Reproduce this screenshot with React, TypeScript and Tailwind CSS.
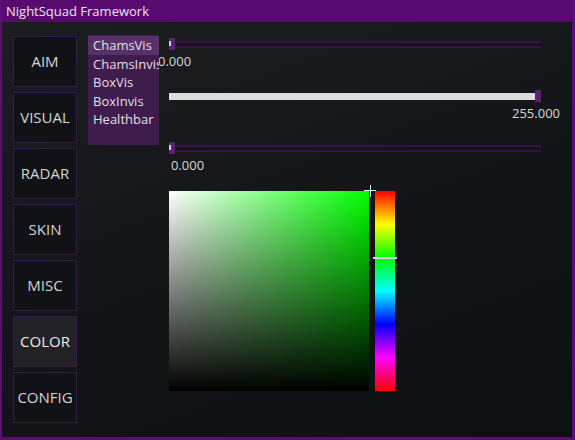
import React from 'react';

const tabs = ['AIM', 'VISUAL', 'RADAR', 'SKIN', 'MISC', 'COLOR', 'CONFIG'];
const items = ['ChamsVis', 'ChamsInvis', 'BoxVis', 'BoxInvis', 'Healthbar'];

// ImGui-ish slider: track, fill, grab, value below
const Slider = ({ value, labelClass }: { value: number; labelClass: string }) => {
  const pct = value / 255;
  return (
    <div className="flex flex-col">
      <div className="relative h-[12px] flex items-center">
        <div className="relative h-[7px] w-full border-y-2 border-[#3a0f4a] bg-[#141417]">
          {value > 0 && (
            <div className="absolute left-0 top-[-2px] h-[7px] bg-[#dcdcdc]" style={{ width: `${pct * 98.5}%` }} />
          )}
        </div>
        <div
          className="absolute top-0 h-[12px] w-[6px] bg-[#5a2270]"
          style={{ left: `${pct * 98.5}%` }}
        />
        {value === 0 && <div className="absolute left-0 top-[3px] h-[5px] w-[2px] bg-[#d8d0dc]" />}
      </div>
      <div className={`mt-[3px] text-[13px] leading-[16px] text-[#d8d8d8] ${labelClass}`}>
        {value.toFixed(3)}
      </div>
    </div>
  );
};

export default function App() {
  return (
    <div
      className="w-[575px] h-[440px] flex flex-col overflow-hidden border-l-2 border-r-[3px] border-b-[3px] border-[#5a0f70] bg-[#141518]"
      style={{ fontFamily: '"Open Sans", "DejaVu Sans", sans-serif' }}
    >
      <div className="h-[22px] shrink-0 bg-[#570b6e] pl-[4px] text-[13px] leading-[22px] text-[#ece4f0]">
        NightSquad Framework
      </div>
      <div className="flex-1 flex bg-[linear-gradient(160deg,#1c1d1f_0%,#141518_50%,#0e0f12_100%)] pl-[11px] pt-[14px]">
        <div className="flex flex-col gap-[5px]">
          {tabs.map((t) => (
            <div
              key={t}
              className={`w-[64px] h-[51px] flex items-center justify-center border border-[#3c1848] text-[15px] ${
                t === 'COLOR' ? 'bg-[#222124] text-[#ececec]' : 'bg-[#111215] text-[#d4d4d4]'
              }`}
            >
              {t}
            </div>
          ))}
        </div>

        <div className="relative ml-[11px] mt-[-1px] flex">
          <div className="z-10 w-[71px] h-[110px] overflow-hidden bg-[#3e1c4c] pt-[1px] text-[13px] text-[#e6dfe9]">
            {items.map((it, i) => (
              <div
                key={it}
                className={`h-[18.6px] leading-[18.6px] whitespace-nowrap pl-[5px] ${i === 0 ? 'bg-[#573168]' : ''}`}
              >
                {it}
              </div>
            ))}
          </div>

          <div className="ml-[10px] mt-[3px] flex flex-col w-[372px]">
            <Slider value={0} labelClass="ml-[-11px] relative z-0" />
            <div className="mt-[21px]">
              <Slider value={255} labelClass="self-end mr-[-19px]" />
            </div>
            <div className="mt-[21px]">
              <Slider value={0} labelClass="ml-[2px]" />
            </div>

            <div className="mt-[18px] flex gap-[6px]">
              <div className="relative w-[200px] h-[200px] bg-[#00ff00]">
                <div className="absolute inset-0 bg-[linear-gradient(to_right,#ffffff,rgba(255,255,255,0))]" />
                <div className="absolute inset-0 bg-[linear-gradient(to_bottom,rgba(0,0,0,0),#000000)]" />
                <div className="absolute right-[-2px] top-[-6px] h-[12px] w-[1px] bg-[#e8e8e8]" />
                <div className="absolute right-[-7px] top-[-1px] h-[1px] w-[12px] bg-[#e8e8e8]" />
              </div>
              <div className="relative w-[20px] h-[200px] bg-[linear-gradient(to_bottom,#ff0000,#ffff00,#00ff00,#00ffff,#0000ff,#ff00ff,#ff0000)]">
                <div className="absolute left-[-2px] top-[66px] h-[2px] w-[24px] bg-[#d8d8d8]" />
              </div>
            </div>
          </div>
        </div>
      </div>
    </div>
  );
}
